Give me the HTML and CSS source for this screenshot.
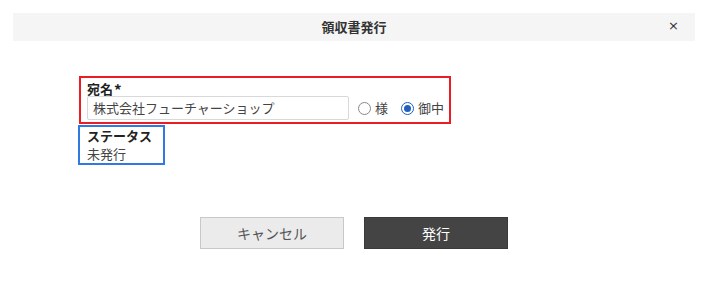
FILE: index.html
```html
<!DOCTYPE html>
<html lang="ja">
<head>
<meta charset="utf-8">
<link rel="stylesheet" href="styles.css">
</head>
<body>
<div class="modal">
  <div class="modal-header">
    <span class="modal-title">領収書発行</span>
    <span class="modal-close">×</span>
  </div>
  <div class="modal-body">
    <div class="field field-name">
      <div class="field-label">宛名<span class="req">*</span></div>
      <div class="field-row">
        <div class="text-input">株式会社フューチャーショップ</div>
        <label class="radio"><span class="radio-dot"></span><span>様</span></label>
        <label class="radio checked"><span class="radio-dot"></span><span>御中</span></label>
      </div>
    </div>
    <div class="field field-status">
      <div class="field-label">ステータス</div>
      <div class="field-value">未発行</div>
    </div>
  </div>
  <div class="modal-footer">
    <button class="btn btn-cancel">キャンセル</button>
    <button class="btn btn-primary">発行</button>
  </div>
</div>
</body>
</html>
```

FILE: styles.css
```css
* { box-sizing: border-box; }
html, body { margin: 0; padding: 0; background: #fff; }
body {
  font-family: "Noto Sans CJK JP", "Noto Sans", sans-serif;
  color: #333;
  width: 708px;
  height: 281px;
  overflow: hidden;
}
.modal { padding: 13px 13px 0 13px; }
.modal-header {
  position: relative;
  height: 28px;
  background: #f5f5f5;
  display: flex;
  align-items: center;
  justify-content: center;
}
.modal-title {
  font-size: 13px;
  font-weight: bold;
  color: #333;
  line-height: 16px;
}
.modal-close {
  position: absolute;
  right: 16px;
  top: 5px;
  font-size: 13px;
  line-height: 16px;
  color: #333;
  font-family: "DejaVu Sans", sans-serif;
}
.modal-body {
  padding: 35px 0 0 66px;
  display: flex;
  flex-direction: column;
  align-items: flex-start;
}
.field-name {
  width: 372px;
  border: 2px solid #ea1c24;
  padding: 2px 4px 2px 6px;
}
.field-label {
  font-size: 13px;
  font-weight: bold;
  line-height: 16px;
  color: #222;
  height: 16px;
  white-space: nowrap;
}
.req {
  display: inline-block;
  font-size: 15px;
  margin-left: 1px;
  position: relative;
  top: 2px;
}
.field-row {
  display: flex;
  align-items: center;
  height: 24px;
}
.text-input {
  flex: 0 0 262px;
  width: 262px;
  height: 24px;
  border: 1px solid #d9d9d9;
  border-radius: 2px;
  padding: 0 5px;
  font-size: 13px;
  line-height: 22px;
  color: #444;
  white-space: nowrap;
}
.radio {
  flex: 0 0 auto;
  display: flex;
  align-items: center;
  font-size: 13px;
  color: #444;
  line-height: 16px;
  white-space: nowrap;
}
.radio:first-of-type { margin-left: 9px; }
.radio + .radio { margin-left: 13px; }
.radio-dot {
  flex: 0 0 13px;
  width: 13px;
  height: 13px;
  border: 1px solid #888;
  border-radius: 50%;
  margin-right: 4px;
  display: flex;
  align-items: center;
  justify-content: center;
}
.radio.checked .radio-dot { border: 1.5px solid #1f5fbf; }
.radio.checked .radio-dot::after {
  content: "";
  width: 7px;
  height: 7px;
  border-radius: 50%;
  background: #1f5fbf;
}
.field-status {
  margin-top: 1px;
  margin-left: -1px;
  width: 87px;
  height: 40px;
  border: 2px solid #2f79e0;
  padding: 1px 0 0 7px;
}
.field-value {
  font-size: 13px;
  line-height: 18px;
  color: #444;
  margin-top: 1px;
}
.modal-footer {
  display: flex;
  justify-content: center;
  gap: 20px;
  margin-top: 52px;
  margin-right: -13px;
  margin-left: -13px;
}
.btn {
  width: 144px;
  height: 32px;
  font-family: inherit;
  font-size: 14px;
  border-radius: 0;
  padding: 0;
}
.btn-cancel {
  background: #ebebeb;
  border: 1px solid #c8c8c8;
  color: #555;
}
.btn-primary {
  background: #444;
  border: 1px solid #3a3a3a;
  color: #fff;
}
```
